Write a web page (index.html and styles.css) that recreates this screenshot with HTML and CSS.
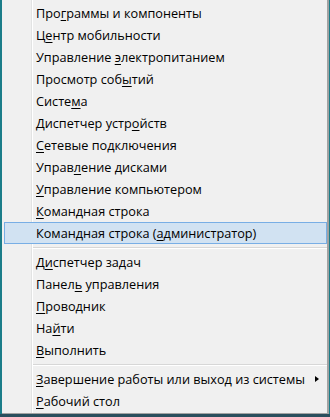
FILE: index.html
```html
<html>
<head>
    <title>Win+X</title>
    <link rel="stylesheet" href="styles.css">
</head>
<body>
    <div class="screen">
        <div class="menu">
            <div class="item"><span>Про<u>г</u>раммы и компоненты</span></div>
            <div class="item"><span>Ц<u>е</u>нтр мобильности</span></div>
            <div class="item"><span>Управление <u>э</u>лектропитанием</span></div>
            <div class="item"><span>Просмотр соб<u>ы</u>тий</span></div>
            <div class="item"><span>Систе<u>м</u>а</span></div>
            <div class="item"><span>Диспетчер устр<u>о</u>йств</span></div>
            <div class="item"><span><u>С</u>етевые подключения</span></div>
            <div class="item"><span>Управ<u>л</u>ение дисками</span></div>
            <div class="item"><span><u>У</u>правление компьютером</span></div>
            <div class="item"><span><u>К</u>омандная строка</span></div>
            <div class="item active"><span>Командная строка (<u>а</u>дминистратор)</span></div>
            <div class="sep"></div>
            <div class="item"><span>Д<u>и</u>спетчер задач</span></div>
            <div class="item"><span>Панел<u>ь</u> управления</span></div>
            <div class="item"><span><u>П</u>роводник</span></div>
            <div class="item"><span>На<u>й</u>ти</span></div>
            <div class="item"><span><u>В</u>ыполнить</span></div>
            <div class="sep"></div>
            <div class="item"><span><u>З</u>авершение работы или выход из системы</span><span class="arrow"></span></div>
            <div class="item"><span><u>Р</u>абочий стол</span></div>
        </div>
        <div class="taskbar"></div>
    </div>
</body>
</html>
```

FILE: styles.css
```css
body {
    margin: 0;
    background-color: #1b7d89;
    font-family: "Open Sans", sans-serif;
    font-size: 12.7px;
    color: #000;
    overflow: hidden;
}

.screen {
    height: 417px;
    display: flex;
    flex-direction: column;
}

.menu {
    margin-left: 2px;
    width: 323px;
    padding: 2px 0 1px 2px;
    border-right: 2px solid #a2a2a2;
    border-bottom: 1px solid #a2a2a2;
    background: linear-gradient(to right, transparent 29px, #e2e3e3 29px, #e2e3e3 30px, #fff 30px, #fff 31px, transparent 31px), #f0f0f0;
}

.item {
    height: 22px;
    line-height: 22px;
    padding-left: 31px;
    border: 1px solid transparent;
    box-sizing: border-box;
    display: flex;
    align-items: center;
    white-space: nowrap;
}

.item.active {
    background-color: #d1e2f2;
    border-color: #78aee5;
}

.item u {
    text-decoration-thickness: 1px;
    text-underline-offset: 2px;
}

.arrow {
    margin-left: auto;
    margin-right: 7px;
    width: 0;
    height: 0;
    border-top: 3px solid transparent;
    border-bottom: 3px solid transparent;
    border-left: 4px solid #000;
}

.sep {
    height: 7px;
    margin-left: 29px;
    display: flex;
    flex-direction: column;
    justify-content: center;
}

.sep::before {
    content: "";
    height: 1px;
    background-color: #d7d7d7;
    border-bottom: 1px solid #fff;
}

.taskbar {
    flex: 1;
    background-color: #2a4e5d;
}
```
